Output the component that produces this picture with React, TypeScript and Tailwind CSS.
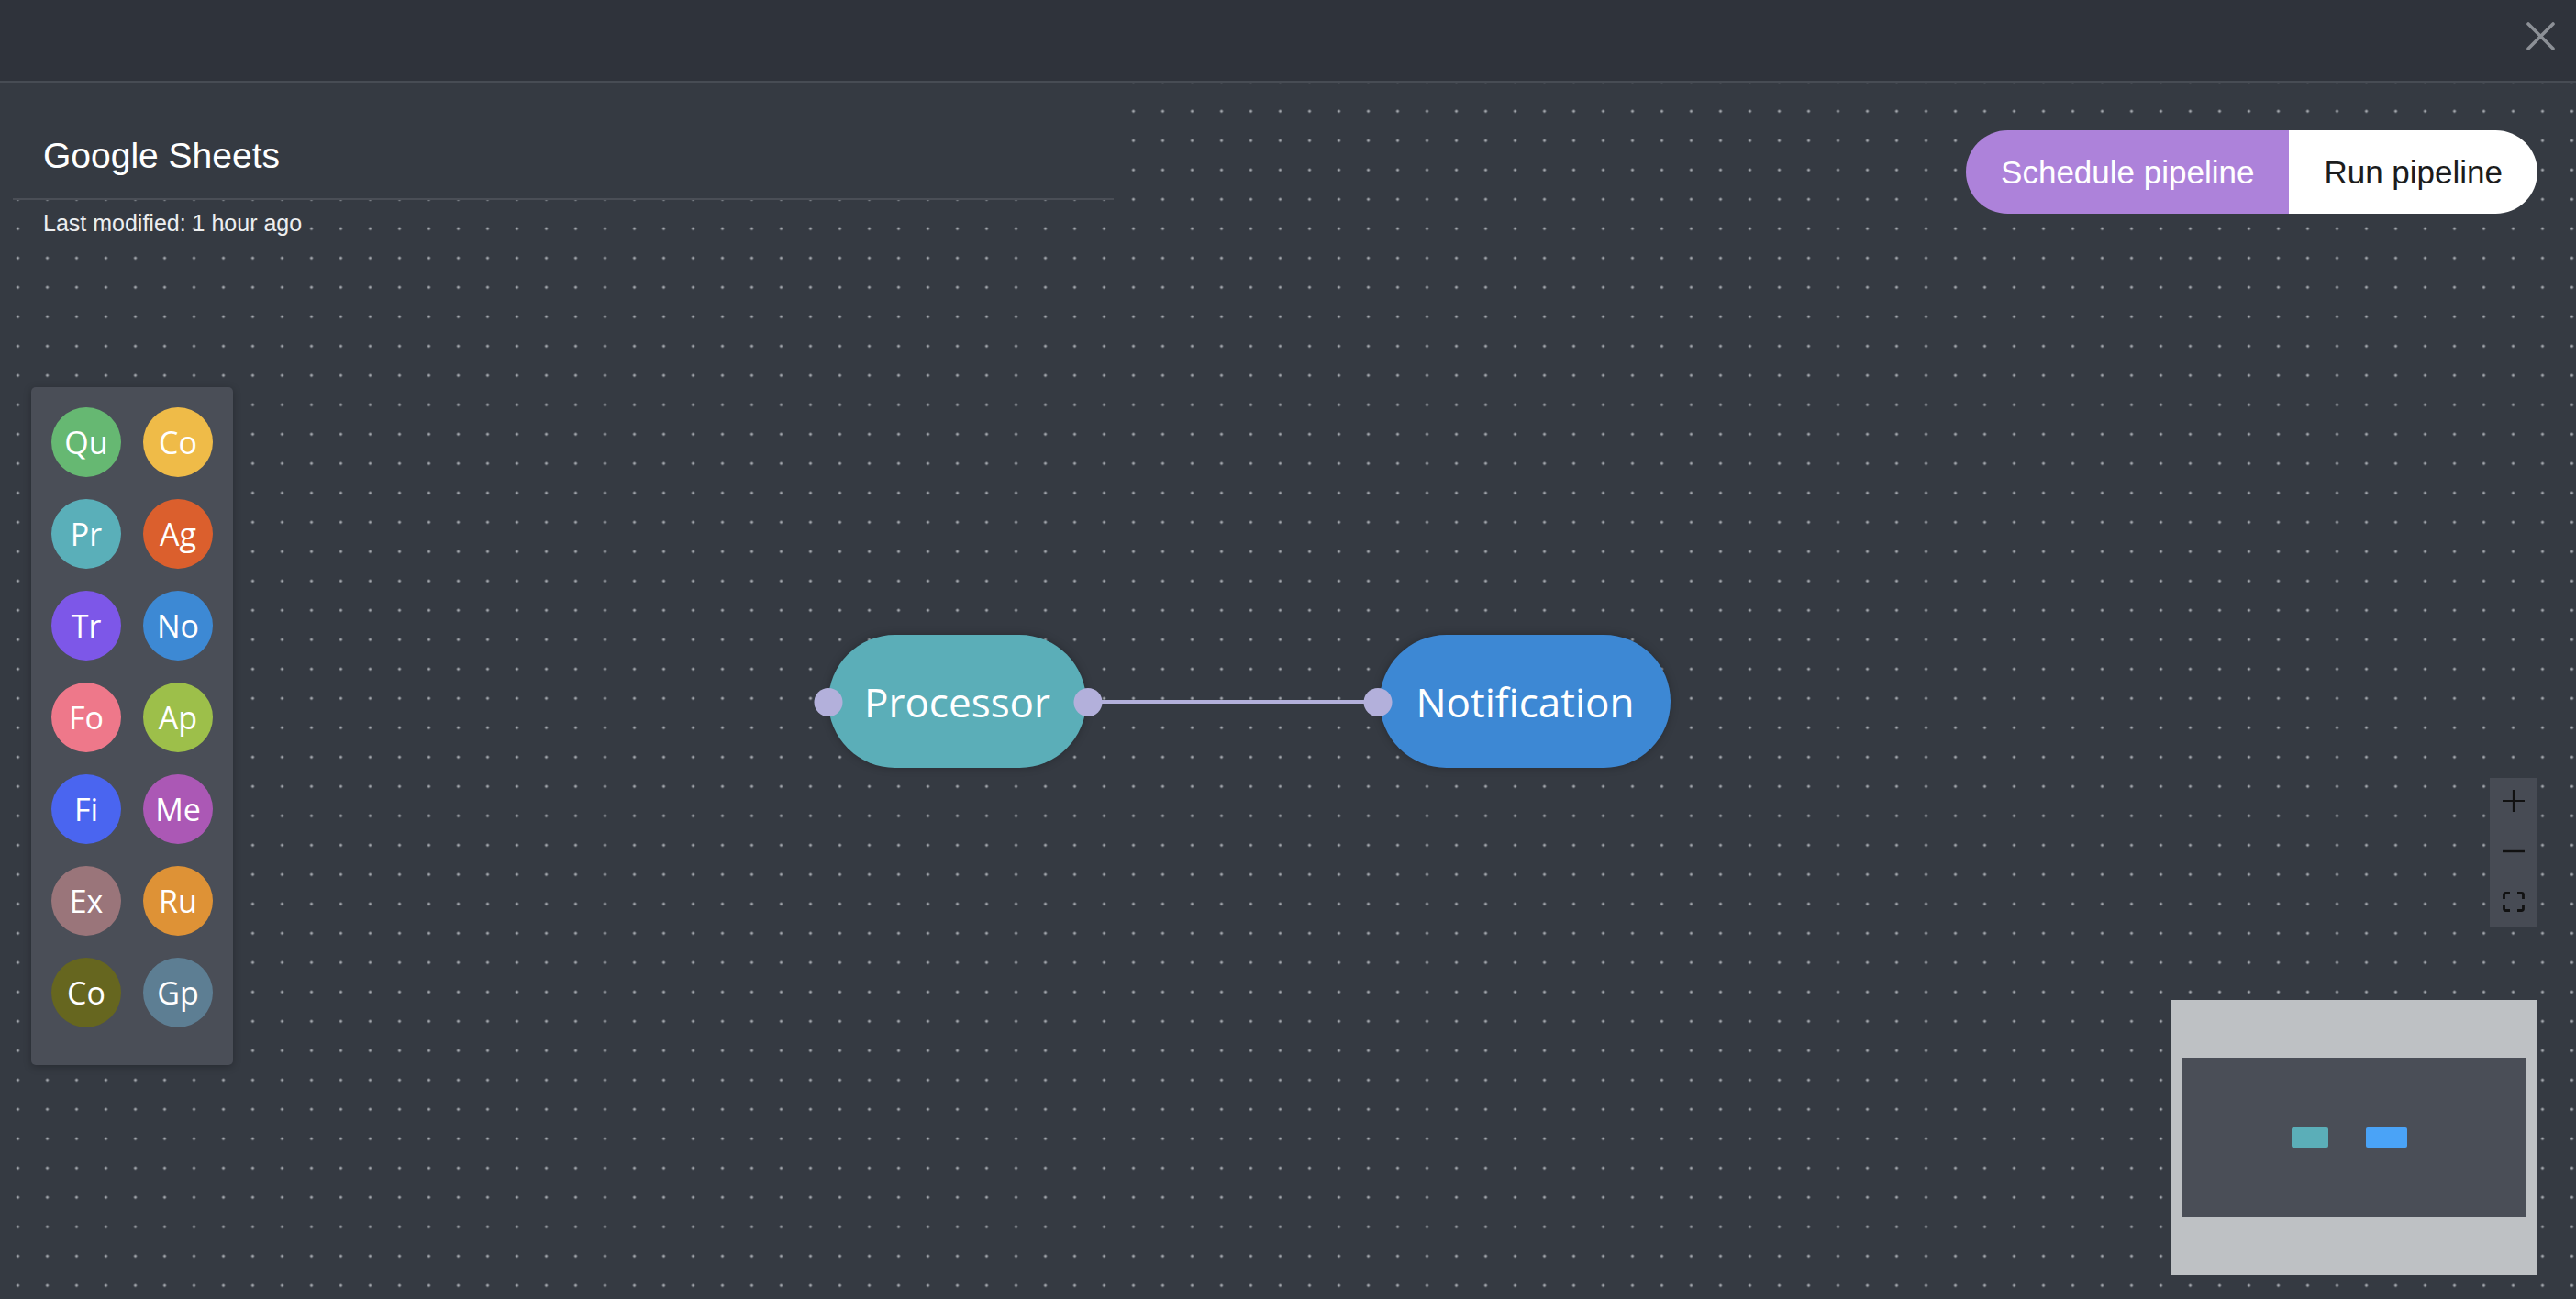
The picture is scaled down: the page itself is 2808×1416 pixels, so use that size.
import React from 'react';

type Tile = { label: string; color: string };

const TILES: Tile[] = [
  { label: 'Qu', color: 'bg-[#66b872]' },
  { label: 'Co', color: 'bg-[#efbb48]' },
  { label: 'Pr', color: 'bg-[#5aafb9]' },
  { label: 'Ag', color: 'bg-[#db5f2d]' },
  { label: 'Tr', color: 'bg-[#7d57e8]' },
  { label: 'No', color: 'bg-[#3d89d4]' },
  { label: 'Fo', color: 'bg-[#ee788a]' },
  { label: 'Ap', color: 'bg-[#9dbf4a]' },
  { label: 'Fi', color: 'bg-[#4a65f0]' },
  { label: 'Me', color: 'bg-[#ab58b5]' },
  { label: 'Ex', color: 'bg-[#9a757a]' },
  { label: 'Ru', color: 'bg-[#de9236]' },
  { label: 'Co', color: 'bg-[#66661f]' },
  { label: 'Gp', color: 'bg-[#5d7e93]' },
];

function Handle({ left }: { left: string }) {
  return (
    <div
      className={`absolute top-[660px] ${left} w-[31px] h-[31px] -translate-x-1/2 rounded-full bg-[#b3b0db] z-10`}
    />
  );
}

export default function App() {
  return (
    <div className="flex flex-col h-screen w-full bg-[#353a42] font-['Liberation_Sans',Arial,sans-serif] overflow-hidden">
      {/* top bar */}
      <div className="h-[90px] shrink-0 bg-[#2f333b] border-b-2 border-[#474c54] flex justify-end items-start pt-[24px] pr-[23px]">
        <svg width="31" height="31" viewBox="0 0 31 31" className="text-[#8c9096]">
          <path d="M2 2 L29 29 M29 2 L2 29" stroke="currentColor" strokeWidth="3.6" strokeLinecap="round" />
        </svg>
      </div>

      {/* canvas */}
      <div className="relative flex-1 [background-image:radial-gradient(circle,#a3a7ad_1.3px,transparent_1.8px)] [background-size:32px_32px] [background-position:3.5px_15.3px]">
        <div className="flex justify-between items-start pl-[14px] pr-[42px]">
          <div className="flex flex-col">
            <div className="w-[1200px] h-[128px] bg-[#353a42] border-b-2 border-[#4a4e56] pl-[33px] pt-[60px]">
              <h1 className="text-[39px] leading-none text-white">Google Sheets</h1>
            </div>
            <p className="mt-[13px] pl-[33px] text-[25px] leading-none text-[#eceef0]">Last modified: 1 hour ago</p>
          </div>

          <div className="mt-[52px] flex h-[91px] rounded-full overflow-hidden text-[35px]">
            <button className="px-[38px] pt-[2px] bg-[#ad82da] text-white">Schedule pipeline</button>
            <button className="px-[38px] pt-[2px] bg-white text-[#1c1c1c]">Run pipeline</button>
          </div>
        </div>

        {/* node palette */}
        <div className="absolute left-[34px] top-[332px] w-[220px] h-[739px] rounded-[5px] bg-[#4a4e57] shadow-[0_2px_8px_rgba(0,0,0,0.25)] pt-[22px] px-[22px] grid grid-cols-2 gap-x-[24px] gap-y-[24px] content-start font-['Open_Sans',sans-serif]">
          {TILES.map((t, i) => (
            <div
              key={i}
              className={`w-[76px] h-[76px] rounded-full ${t.color} flex items-center justify-center text-white text-[34px] leading-none`}
            >
              {t.label}
            </div>
          ))}
        </div>

        {/* edge */}
        <svg className="absolute left-0 top-0 w-full h-full pointer-events-none">
          <line x1="1186" y1="675" x2="1502" y2="675" stroke="#b3b0db" strokeWidth="4" />
        </svg>

        {/* nodes */}
        <div className="absolute left-[903px] top-[602px] w-[281px] h-[145px] rounded-full bg-[#5baeb8] shadow-[0_0_10px_rgba(0,0,0,0.25)] flex items-center justify-center font-['Open_Sans',sans-serif] text-[44px] text-white">
          Processor
        </div>
        <div className="absolute left-[1504px] top-[602px] w-[317px] h-[145px] rounded-full bg-[#3d88d4] shadow-[0_0_10px_rgba(0,0,0,0.25)] flex items-center justify-center font-['Open_Sans',sans-serif] text-[44px] text-white">
          Notification
        </div>
        <Handle left="left-[903px]" />
        <Handle left="left-[1186px]" />
        <Handle left="left-[1502px]" />

        {/* zoom controls */}
        <div className="absolute right-[42px] top-[758px] w-[52px] flex flex-col bg-[#474b54] text-[#111]">
          <button className="h-[54px] flex items-center justify-center pb-[4px]">
            <svg width="24" height="24" viewBox="0 0 24 24">
              <path d="M12 0 V24 M0 12 H24" stroke="currentColor" strokeWidth="2.2" />
            </svg>
          </button>
          <button className="h-[54px] flex items-center justify-center pb-[2px]">
            <svg width="24" height="24" viewBox="0 0 24 24">
              <path d="M0 12 H24" stroke="currentColor" strokeWidth="2.4" />
            </svg>
          </button>
          <button className="h-[54px] flex items-center justify-center">
            <svg width="24" height="22" viewBox="0 0 24 22">
              <path
                d="M1.5 8 V3.5 Q1.5 1.5 3.5 1.5 H8 M16 1.5 H20.5 Q22.5 1.5 22.5 3.5 V8 M22.5 14 V18.5 Q22.5 20.5 20.5 20.5 H16 M8 20.5 H3.5 Q1.5 20.5 1.5 18.5 V14"
                fill="none"
                stroke="currentColor"
                strokeWidth="2.8"
              />
            </svg>
          </button>
        </div>

        {/* minimap */}
        <div className="absolute right-[42px] bottom-[26px] w-[400px] h-[300px] bg-[#bec1c4] flex items-center justify-center">
          <div className="w-[376px] h-[174px] bg-[#4a4e57] border-x border-[#6b6f76] flex items-center pl-[119px] gap-[41px]">
            <div className="w-[40px] h-[22px] rounded-[2px] bg-[#5baeb8]" />
            <div className="w-[45px] h-[22px] rounded-[2px] bg-[#4aa3f7]" />
          </div>
        </div>
      </div>
    </div>
  );
}
